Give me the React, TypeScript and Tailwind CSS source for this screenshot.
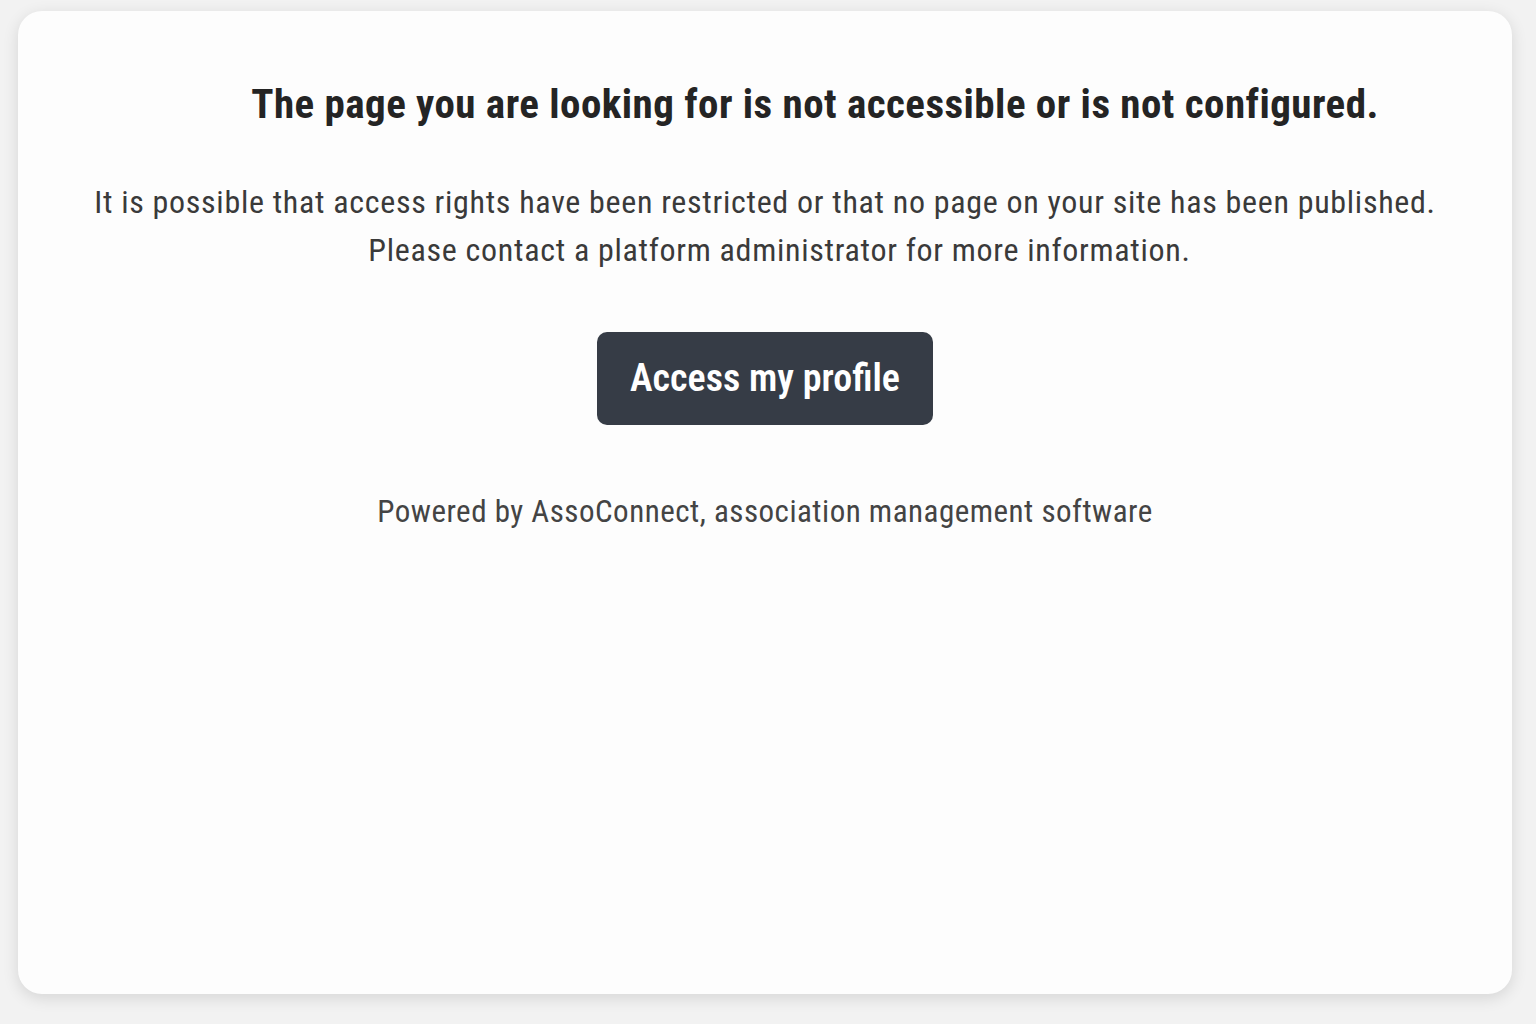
export default function App() {
  return (
    <main className="min-h-screen bg-[#f2f2f2] pt-[11px] pl-[18px] pr-[24px] pb-[30px] font-['Roboto',sans-serif]">
      <div className="flex h-[983px] w-[1494px] flex-col items-center rounded-[24px] bg-[#fdfdfd] pt-[69px] shadow-[0_4px_16px_rgba(0,0,0,0.12)]">
        <h1 className="pl-[100px] text-[41px] font-bold leading-[48px] tracking-[0.45px] text-[#242424] [font-stretch:condensed]">
          The page you are looking for is not accessible or is not configured.
        </h1>

        <p className="mt-[50px] text-center text-[32px] leading-[48px] tracking-[0.7px] text-[#3a3a3a] [font-stretch:condensed]">
          It is possible that access rights have been restricted or that no page on your site has been published.
          <span className="block pl-[29px]">Please contact a platform administrator for more information.</span>
        </p>

        <button className="mt-[58px] flex h-[93px] w-[336px] items-center justify-center whitespace-nowrap rounded-[10px] bg-[#363c46] text-[38px] font-semibold text-white [font-stretch:condensed]">
          Access my profile
        </button>

        <p className="mt-[67px] text-[31px] leading-[40px] tracking-[0.5px] text-[#444444] [font-stretch:condensed]">
          Powered by AssoConnect, association management software
        </p>
      </div>
    </main>
  )
}
